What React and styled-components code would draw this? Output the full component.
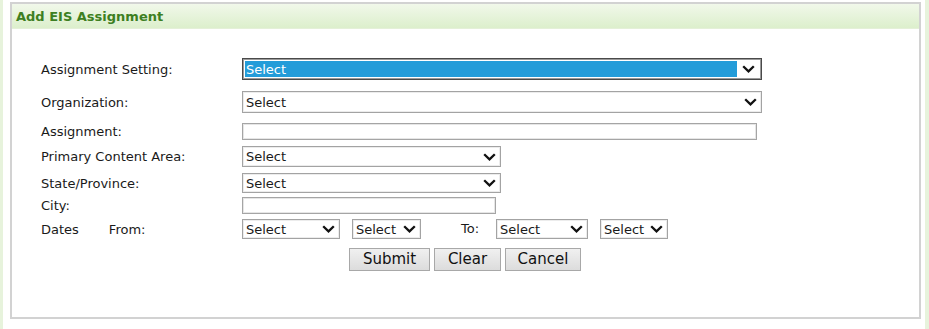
import React from "react";
import styled, { createGlobalStyle } from "styled-components";

const GlobalStyle = createGlobalStyle`
  html, body {
    margin: 0;
    padding: 0;
    background: #fff;
  }
  body {
    font-family: Verdana, "DejaVu Sans", sans-serif;
    font-size: 13px;
    color: #1a1a1a;
  }
`;

const Chevron = () => (
  <svg width="13" height="8" viewBox="0 0 13 8">
    <polyline
      points="1.2,1.2 6.5,6.4 11.8,1.2"
      fill="none"
      stroke="#111"
      strokeWidth="2.3"
    />
  </svg>
);

const SelectField = ({ width, height, focused }) => (
  <SelectBox width={width} height={height} focused={focused}>
    <SelectValue focused={focused}>Select</SelectValue>
    <ChevronWrap>
      <Chevron />
    </ChevronWrap>
  </SelectBox>
);

export default function App() {
  return (
    <>
      <GlobalStyle />
      <Page>
        <Panel>
          <Header>
            <Title>Add EIS Assignment</Title>
          </Header>
          <Body>
            <Row height="22px" top="29px">
              <Label>Assignment Setting:</Label>
              <SelectField width="520px" height="22px" focused />
            </Row>
            <Row height="22px" top="11px">
              <Label>Organization:</Label>
              <SelectField width="520px" height="22px" />
            </Row>
            <Row height="17px" top="10px">
              <Label>Assignment:</Label>
              <TextInput width="515px" />
            </Row>
            <Row height="21px" top="6px">
              <Label>Primary Content Area:</Label>
              <SelectField width="259px" height="21px" />
            </Row>
            <Row height="20px" top="6px">
              <Label>State/Province:</Label>
              <SelectField width="259px" height="20px" />
            </Row>
            <Row height="17px" top="4px">
              <Label>City:</Label>
              <TextInput width="254px" />
            </Row>
            <Row height="20px" top="5px">
              <Label>
                Dates<FromText>From:</FromText>
              </Label>
              <SelectField width="98px" height="20px" />
              <Spacer width="12px" />
              <SelectField width="69px" height="20px" />
              <ToText>To:</ToText>
              <SelectField width="92px" height="20px" />
              <Spacer width="12px" />
              <SelectField width="68px" height="20px" />
            </Row>
            <ButtonRow>
              <Button width="81px">Submit</Button>
              <Button width="67px">Clear</Button>
              <Button width="76px">Cancel</Button>
            </ButtonRow>
          </Body>
        </Panel>
      </Page>
    </>
  );
}

const Page = styled.div`
  width: 929px;
  height: 329px;
  box-sizing: border-box;
  border-left: 3px solid #e7f3dc;
  border-right: 4px solid #e7f3dc;
  padding: 2px 4px 0 7px;
`;

const Panel = styled.div`
  width: 911px;
  height: 317px;
  box-sizing: border-box;
  border: 2px solid #d2d2d2;
  background: #fff;
`;

const Header = styled.div`
  height: 24px;
  display: flex;
  align-items: center;
  padding-left: 4px;
  background: linear-gradient(#f1f8ea, #dcefcc);
  border-bottom: 1px solid #e4f0d8;
`;

const Title = styled.span`
  font-weight: bold;
  font-size: 13px;
  color: #3d7f22;
`;

const Body = styled.div`
  padding-left: 29px;
  display: flex;
  flex-direction: column;
`;

const Row = styled.div`
  display: flex;
  align-items: center;
  height: ${(props) => props.height};
  margin-top: ${(props) => props.top};
`;

const Label = styled.div`
  width: 201px;
  flex-shrink: 0;
  font-size: 13px;
  color: #1a1a1a;
  white-space: nowrap;
`;

const FromText = styled.span`
  margin-left: 30px;
`;

const ToText = styled.span`
  font-size: 13px;
  margin: 0 17px 0 40px;
  position: relative;
  top: -1px;
`;

const Spacer = styled.div`
  width: ${(props) => props.width};
  flex-shrink: 0;
`;

const SelectBox = styled.div`
  width: ${(props) => props.width};
  height: ${(props) => props.height};
  box-sizing: border-box;
  flex-shrink: 0;
  display: flex;
  align-items: center;
  padding: ${(props) => (props.focused ? "2px" : "0 0 0 3px")};
  border: 1px solid ${(props) => (props.focused ? "#4a4a4a" : "#a3a3a3")};
  box-shadow: ${(props) =>
    props.focused ? "inset 0 0 0 1px #9a9a9a" : "inset 0 0 0 1px #ececec"};
  background: #fff;
`;

const SelectValue = styled.span`
  flex: 1;
  align-self: stretch;
  display: flex;
  align-items: center;
  padding-left: ${(props) => (props.focused ? "1px" : "0")};
  font-size: 13px;
  color: ${(props) => (props.focused ? "#fff" : "#1a1a1a")};
  background: ${(props) => (props.focused ? "#239cd9" : "transparent")};
  white-space: nowrap;
  overflow: hidden;
`;

const ChevronWrap = styled.span`
  display: flex;
  align-items: center;
  padding: 0 4px 0 5px;
`;

const TextInput = styled.div`
  width: ${(props) => props.width};
  height: 17px;
  box-sizing: border-box;
  flex-shrink: 0;
  border: 1px solid #a5a5a5;
  box-shadow: inset 0 0 0 1px #e6e6e6;
  background: #fff;
`;

const ButtonRow = styled.div`
  display: flex;
  gap: 4px;
  margin-top: 9px;
  padding-left: 308px;
`;

const Button = styled.button`
  width: ${(props) => props.width};
  height: 23px;
  padding: 0;
  font-family: Verdana, "DejaVu Sans", sans-serif;
  font-size: 15px;
  color: #111;
  background: linear-gradient(#f0f0f0, #dcdcdc);
  border: 1px solid #a8a8a8;
  border-radius: 0;
  line-height: 21px;
  text-align: center;
`;
